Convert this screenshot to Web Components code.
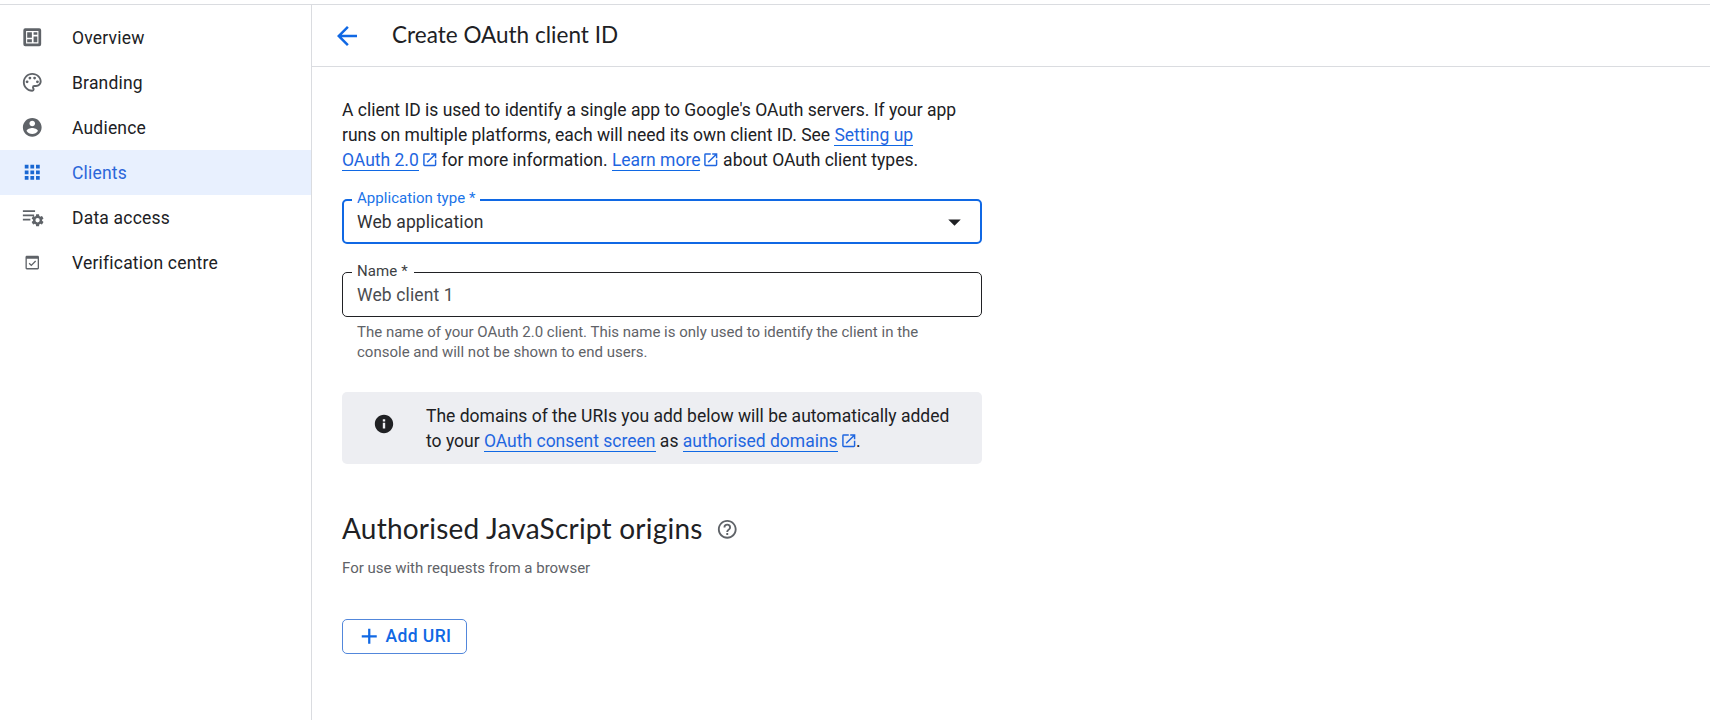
<!DOCTYPE html>
<html lang="en-GB">
<head>
<meta charset="utf-8">
<title>Create OAuth client ID</title>
<style>
html,body{margin:0;height:100%;overflow:hidden;background:#fff}
body{font-family:Roboto,"Liberation Sans",sans-serif;font-size:17.5px;color:#202124}
</style>
</head>
<body>
<oauth-page></oauth-page>
<script>
const ICONS = {
  overview: '<path fill-rule="evenodd" d="M4.500 2.500h15a2 2 0 0 1 2 2v15a2 2 0 0 1-2 2h-15a2 2 0 0 1-2-2v-15a2 2 0 0 1 2-2zM5.400 5.400v13.200h13.200V5.400z"/><path d="M6.600 6.600h5v5.800h-5zM13.400 6.600h4v2.600h-4zM6.600 14.200h5v3.200h-5zM13.400 11.200h4v6.200h-4z"/>',
  palette: '<path d="M12 22C6.49 22 2 17.51 2 12S6.49 2 12 2s10 4.04 10 9c0 3.31-2.69 6-6 6h-1.77c-.28 0-.5.22-.5.5 0 .12.05.23.13.33.41.47.64 1.06.64 1.67A2.5 2.5 0 0 1 12 22zm0-18c-4.41 0-8 3.59-8 8s3.59 8 8 8c.28 0 .5-.22.5-.5a.54.54 0 0 0-.14-.35c-.41-.46-.63-1.05-.63-1.65a2.5 2.5 0 0 1 2.5-2.5H16c2.21 0 4-1.79 4-4 0-3.86-3.59-7-8-7z"/><circle cx="6.5" cy="11.5" r="1.5"/><circle cx="9.5" cy="7.5" r="1.5"/><circle cx="14.5" cy="7.5" r="1.5"/><circle cx="17.5" cy="11.5" r="1.5"/>',
  person: '<path d="M12 2C6.48 2 2 6.48 2 12s4.48 10 10 10 10-4.48 10-10S17.52 2 12 2zm0 3c1.66 0 3 1.34 3 3s-1.34 3-3 3-3-1.34-3-3 1.34-3 3-3zm0 14.2c-2.5 0-4.71-1.28-6-3.22.03-1.99 4-3.08 6-3.08 1.99 0 5.97 1.09 6 3.08-1.29 1.94-3.5 3.22-6 3.22z"/>',
  apps: '<path d="M4 8h4V4H4zm6 12h4v-4h-4zm-6 0h4v-4H4zm0-6h4v-4H4zm6 0h4v-4h-4zm6-10v4h4V4zm-6 4h4V4h-4zm6 6h4v-4h-4zm0 6h4v-4h-4z"/>',
  data: '<path d="M2 4.500h13v2H2zM2 9h12v2H2zM2 13.500h8v2H2z"/><g transform="translate(10 7.500) scale(.64)"><path d="M19.43 12.98c.04-.32.07-.64.07-.98s-.03-.66-.07-.98l2.11-1.65c.19-.15.24-.42.12-.64l-2-3.46c-.12-.22-.39-.3-.61-.22l-2.49 1c-.52-.4-1.08-.73-1.69-.98l-.38-2.65A.49.49 0 0 0 14 2h-4c-.25 0-.46.18-.49.42l-.38 2.65c-.61.25-1.17.59-1.69.98l-2.49-1c-.23-.09-.49 0-.61.22l-2 3.46c-.13.22-.07.49.12.64l2.11 1.65c-.04.32-.07.65-.07.98s.03.66.07.98l-2.11 1.65c-.19.15-.24.42-.12.64l2 3.46c.12.22.39.3.61.22l2.49-1c.52.4 1.08.73 1.69.98l.38 2.65c.03.24.24.42.49.42h4c.25 0 .46-.18.49-.42l.38-2.65c.61-.25 1.17-.59 1.69-.98l2.49 1c.23.09.49 0 .61-.22l2-3.46c.12-.22.07-.49-.12-.64zM12 15.600a3.600 3.600 0 1 1 0-7.200 3.600 3.600 0 0 1 0 7.200z"/></g>',
  verify: '<path fill-rule="evenodd" d="M6.2 5h11.6c.8 0 1.4.6 1.4 1.4v11.8c0 .8-.6 1.4-1.4 1.4H6.2c-.8 0-1.4-.6-1.4-1.4V6.400c0-.8.6-1.400 1.400-1.400zM6.200 8.200v10h11.600v-10z"/><path d="M8.700 13l2.300 2.300 4.600-4.600" fill="none" stroke="currentColor" stroke-width="1.400"/>',
  back: '<path d="M20 11H7.830l5.590-5.590L12 4l-8 8 8 8 1.410-1.410L7.830 13H20z"/>',
  open: '<path d="M19 19H5V5h7V3H5a2 2 0 0 0-2 2v14a2 2 0 0 0 2 2h14c1.100 0 2-.9 2-2v-7h-2zM14 3v2h3.590l-9.830 9.830 1.410 1.410L19 6.410V10h2V3z"/>',
  info: '<path d="M12 2C6.480 2 2 6.480 2 12s4.480 10 10 10 10-4.480 10-10S17.520 2 12 2zm1.300 15h-2.600v-6.300h2.600zm0-7.700h-2.600V6.700h2.600z"/>',
  help: '<path d="M11 18h2v-2h-2zm1-16C6.480 2 2 6.480 2 12s4.480 10 10 10 10-4.480 10-10S17.520 2 12 2zm0 18c-4.410 0-8-3.590-8-8s3.590-8 8-8 8 3.590 8 8-3.590 8-8 8zm0-14a4 4 0 0 0-4 4h2c0-1.100.9-2 2-2s2 .9 2 2c0 2-3 1.750-3 5h2c0-2.250 3-2.500 3-5a4 4 0 0 0-4-4z"/>',
  plus: '<path d="M20 13.200h-6.800V20h-2.400v-6.800H4v-2.400h6.800V4h2.400v6.800H20z"/>',
  drop: '<path d="M6 9l6 6 6-6z"/>'
};

function element(name, css, html) {
  customElements.define(name, class extends HTMLElement {
    constructor() {
      super();
      const t = document.createElement('template');
      t.innerHTML = `<style>*{box-sizing:border-box}${css}</style>${html}`;
      this.attachShadow({mode: 'open'}).append(t.content.cloneNode(true));
    }
  });
}

customElements.define('ui-icon', class extends HTMLElement {
  connectedCallback() {
    if (this.shadowRoot) return;
    this.attachShadow({mode: 'open'}).innerHTML =
      `<style>:host{display:inline-block;flex:none;width:var(--size,22.5px);height:var(--size,22.5px)}svg{display:block;width:100%;height:100%;fill:currentColor}</style><svg viewBox="0 0 24 24" aria-hidden="true">${ICONS[this.getAttribute('name')]}</svg>`;
  }
});

element('nav-item', `
  :host{display:flex;align-items:center;height:45px;padding-left:21px;gap:28.500px;letter-spacing:.2px}
  ::slotted(ui-icon){color:#5f6368}
  :host([active]){background:#e8f0fe;color:#2b66d9}
  :host([active]) ::slotted(ui-icon){color:#1967d2}
`, `<slot name="icon"></slot><span><slot></slot></span>`);

element('side-nav', `
  :host{display:block;width:312px;flex:none;border-right:1px solid #dadce0;padding-top:10px;box-sizing:border-box}
`, `
  <nav>
    <nav-item><ui-icon slot="icon" name="overview"></ui-icon>Overview</nav-item>
    <nav-item><ui-icon slot="icon" name="palette"></ui-icon>Branding</nav-item>
    <nav-item><ui-icon slot="icon" name="person"></ui-icon>Audience</nav-item>
    <nav-item active><ui-icon slot="icon" name="apps"></ui-icon>Clients</nav-item>
    <nav-item><ui-icon slot="icon" name="data"></ui-icon>Data access</nav-item>
    <nav-item><ui-icon slot="icon" name="verify"></ui-icon>Verification centre</nav-item>
  </nav>`);

element('page-header', `
  :host{display:flex;align-items:center;height:62px;border-bottom:1px solid #dadce0;padding-left:20px;gap:30px;box-sizing:border-box}
  ui-icon{--size:30px;color:#1068e4}
  h1{margin:0;padding-bottom:2px;font:400 22.500px/30px Lato,sans-serif;letter-spacing:.02px}
`, `<ui-icon name="back"></ui-icon><h1><slot></slot></h1>`);

element('text-link', `
  :host{display:inline;color:#1f66e0}
  a{border-bottom:1px solid #1068e4}
  ui-icon{--size:17.500px;vertical-align:-2px;margin:0 -1.200px 0 2px;display:none}
  :host([external]) ui-icon{display:inline-block}
`, `<a><slot></slot></a><ui-icon name="open"></ui-icon>`);

element('form-field', `
  :host{display:block;--line:#202124}
  fieldset{margin:0;min-width:0;height:53px;padding:0 13px 0 14px;border:1px solid var(--line);border-radius:5px;display:block}
  legend{height:17px;font-size:15px;line-height:15px;padding:0 6px 0 5px;margin-left:-5px;letter-spacing:.1px;color:var(--label,#3c4043)}
  .row{display:flex;justify-content:space-between;align-items:center;height:26px;margin-top:1px;letter-spacing:.13px;color:var(--value,#4a4d51)}
  ui-icon{--size:25px;color:#202124}
  :host([focused]){--line:#1068e4;--label:#1a73e8;--value:#303134}
  :host([focused]) fieldset{border-width:2px;padding:0 13px 0 13px}
  :host([focused]) legend{height:18px;padding-right:4px;letter-spacing:.05px}
  :host([focused]) .row{margin-top:0}
  :host(:not([select])) ui-icon{display:none}
  .hint{display:block;font-size:15px;line-height:20px;color:#5f6368;padding:5px 15px 0}
  :host([select]) .hint{display:none}
`, `<fieldset><legend><slot name="label"></slot></legend><div class="row"><span><slot></slot></span><ui-icon name="drop"></ui-icon></div></fieldset><div class="hint"><slot name="hint"></slot></div>`);

element('info-banner', `
  :host{display:flex;box-sizing:border-box;height:72px;border-radius:5px;background:#edeef2;padding:12px 20px 0 31px;line-height:25px}
  ui-icon{margin:9px 31px 0 0;--size:22px;color:#202124}
`, `<ui-icon name="info"></ui-icon><div><slot></slot></div>`);

element('outline-button', `
  :host{display:block}
  button{display:flex;align-items:center;width:125px;height:35px;padding:0 0 0 15px;gap:5px;border:1px solid #5287db;border-radius:5px;background:#fff;color:#1068e4;font:500 17.500px/33px Roboto,sans-serif;letter-spacing:.4px}
`, `<button type="button"><ui-icon name="plus"></ui-icon><span><slot></slot></span></button>`);

element('oauth-page', `
  :host{display:flex;flex-direction:column;height:100vh}
  .rule{height:5px;flex:none;border-bottom:1px solid #dadce0}
  .body{display:flex;flex:1;min-height:0}
  .main{flex:1}
  .content{width:640px;margin-left:30px;padding-top:31px}
  p{margin:0;line-height:25px}
  .type{margin-top:18px}
  .name{margin-top:20px}
  info-banner{margin-top:30px}
  .heading{display:flex;align-items:center;gap:13px;margin-top:46px;height:36px;color:#5f6368}
  .heading ui-icon{margin-top:2px}
  h2{margin:0;font:400 28px/36px Lato,sans-serif;letter-spacing:.22px;color:#202124}
  .sub{font-size:15px;line-height:20px;color:#5f6368;margin-top:12px}
  outline-button{margin-top:41px}
`, `
  <div class="rule"></div>
  <div class="body">
    <side-nav></side-nav>
    <div class="main">
      <page-header>Create OAuth client ID</page-header>
      <div class="content">
        <p>A client ID is used to identify a single app to Google's OAuth servers. If your app<br>runs on multiple platforms, each will need its own client ID. See <text-link>Setting up</text-link><br><text-link external>OAuth 2.0</text-link> for more information. <text-link external>Learn more</text-link> about OAuth client types.</p>
        <form-field class="type" select focused><span slot="label">Application type *</span>Web application</form-field>
        <form-field class="name"><span slot="label">Name *</span>Web client 1<span slot="hint">The name of your OAuth 2.0 client. This name is only used to identify the client in the<br>console and will not be shown to end users.</span></form-field>
        <info-banner>The domains of the URIs you add below will be automatically added<br>to your <text-link>OAuth consent screen</text-link> as <text-link external>authorised domains</text-link>.</info-banner>
        <div class="heading"><h2>Authorised JavaScript origins</h2><ui-icon name="help"></ui-icon></div>
        <p class="sub">For use with requests from a browser</p>
        <outline-button>Add URI</outline-button>
      </div>
    </div>
  </div>`);
</script>
</body>
</html>
